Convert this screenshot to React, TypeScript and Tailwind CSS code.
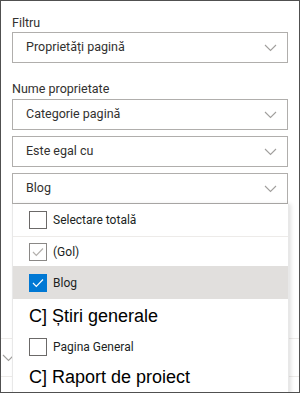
import React from "react";

const Chevron = () => (
  <svg width="13" height="8" viewBox="0 0 13 8" fill="none">
    <path d="M1 1L6.5 6.5L12 1" stroke="#a19f9d" strokeWidth="1.1" />
  </svg>
);

const Box = ({ text }: { text: string }) => (
  <div className="flex h-[31px] items-center justify-between border border-[#b0aeac] pl-[13px] pr-[10px] text-[12.5px] text-[#323130]">
    <span>{text}</span>
    <Chevron />
  </div>
);

const Check = ({ color }: { color: string }) => (
  <svg width="12" height="10" viewBox="0 0 12 10" fill="none">
    <path d="M1 5L4.3 8.3L11 1.5" stroke={color} strokeWidth="1.2" />
  </svg>
);

export default function App() {
  return (
    <div
      className="relative h-[393px] w-[300px] overflow-hidden border border-[#505050] bg-white"
      style={{ fontFamily: "Roboto, 'Liberation Sans', sans-serif" }}
    >
      <div className="px-[11px]">
        <div className="flex h-[31px] items-end text-[12.5px] leading-[18px] text-[#323130]">Filtru</div>
        <Box text="Proprietăți pagină" />
        <div className="flex h-[36px] items-end pb-[1px] text-[12.5px] leading-[18px] text-[#323130]">Nume proprietate</div>
        <div className="flex flex-col gap-[6px]">
          <Box text="Categorie pagină" />
          <Box text="Este egal cu" />
          <Box text="Blog" />
        </div>
      </div>
      <div className="mt-[134px] flex h-[39px] items-center border-y border-[#edebe9] pl-[1px]">
        <Chevron />
      </div>

      <div className="absolute left-[11px] top-[203px] w-[277px] border-l border-r border-[#e8e8e8] bg-white shadow-[2px_0_4px_rgba(0,0,0,0.12)]">
        <div className="flex h-[33px] items-center gap-[6px] border-b border-[#edebe9] pl-[16px] text-[12px] text-[#201f1e]">
          <span className="h-[18px] w-[18px] border border-[#6b6968] bg-white" />
          <span>Selectare totală</span>
        </div>
        <div className="flex h-[29px] items-center gap-[6px] pl-[16px] text-[12px] text-[#201f1e]">
          <span className="flex h-[18px] w-[18px] items-center justify-center border border-[#8a8886] bg-white">
            <Check color="#b3b0ad" />
          </span>
          <span>(Gol)</span>
        </div>
        <div className="flex h-[33px] items-center gap-[6px] bg-[#e1dfdd] pl-[16px] text-[12px] text-[#201f1e]">
          <span className="flex h-[18px] w-[18px] items-center justify-center bg-[#0078d4]">
            <Check color="#ffffff" />
          </span>
          <span>Blog</span>
        </div>
        <div
          className="flex h-[34px] items-center pl-[16px] text-[18px] text-black"
          style={{ fontFamily: "'Liberation Sans', Arial, sans-serif" }}
        >
          C] Știri generale
        </div>
        <div className="flex h-[27px] items-center gap-[6px] pl-[16px] text-[12px] text-[#201f1e]">
          <span className="h-[18px] w-[18px] border border-[#6b6968] bg-white" />
          <span>Pagina General</span>
        </div>
        <div
          className="flex h-[34px] items-center pl-[16px] text-[18px] text-black"
          style={{ fontFamily: "'Liberation Sans', Arial, sans-serif" }}
        >
          C] Raport de proiect
        </div>
        <div className="h-[20px]" />
      </div>
    </div>
  );
}
